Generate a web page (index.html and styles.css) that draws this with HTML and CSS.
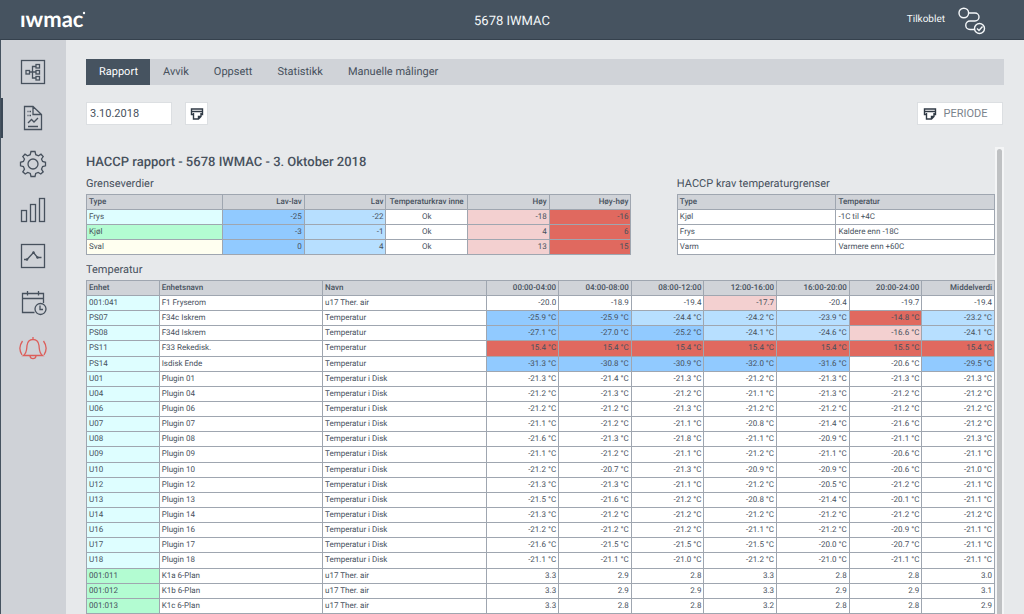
FILE: index.html
```html
<!DOCTYPE html>
<html lang="no">
<head>
<meta charset="utf-8">
<title>5678 IWMAC</title>
<link rel="stylesheet" href="styles.css">
</head>
<body>
<header class="topbar">
  <a class="logo" href="#" aria-label="iwmac"><svg width="80" height="32" viewBox="0 0 80 32"><text x="0" y="23">ıwmac</text><circle cx="64" cy="9" r="1.2"/></svg></a>
  <div class="site">5678 IWMAC</div>
  <div class="status"><span>Tilkoblet</span>
    <svg width="28" height="28" viewBox="0 0 28 28"><circle cx="5.800" cy="6" r="4.800"/><path d="M10.600 6H17a4 4 0 0 1 0 8H12a4 4 0 0 0 0 8.500H16.500"/><circle cx="21.500" cy="21.500" r="5"/><path d="M19 21.500l2 2 3.500-4"/></svg>
  </div>
</header>
<div class="layout">
  <nav class="sidebar" aria-label="Hovedmeny">
    <a href="#" aria-label="Oversikt"><svg viewBox="0 0 28 28"><rect x="2.500" y="2.500" width="23" height="23"/><rect x="7" y="12.500" width="3.500" height="3.500"/><path d="M10.500 14H17M17 8.500H13.500V20H17"/><rect x="17" y="6.500" width="3.500" height="3.500"/><rect x="17" y="12.500" width="3.500" height="3.500"/><rect x="17" y="18.500" width="3.500" height="3.500"/></svg></a>
    <a href="#" class="current" aria-label="Rapport"><svg viewBox="0 0 28 28"><path d="M5.500 2.500H14L22.500 10.500V25.500H5.500ZM14 2.500V10.500H22.500M8.500 7.500H9.500M10.500 7.500H12M8.500 11.500H9.500M10.500 11.500H12M9 22.500H19M9 19L12.500 15.500 15 18 19 14"/></svg></a>
    <a href="#" aria-label="Innstillinger"><svg viewBox="0 0 28 28"><circle cx="14" cy="14" r="5"/><path d="M12 1.500H16L16.800 4.700L19.500 5.800L22 4.200L24.200 6.500L22.500 9L23.600 11.500L26.500 12.300V15.800L23.600 16.600L22.500 19.200L24.200 21.800L21.800 24L19.200 22.500L16.700 23.500L16 26.500H12L11.300 23.500L8.800 22.500L6.200 24L3.800 21.800L5.500 19.200L4.400 16.600L1.500 15.800V12.300L4.400 11.500L5.500 9L3.800 6.500L6 4.200L8.500 5.800L11.200 4.700Z"/></svg></a>
    <a href="#" aria-label="Statistikk"><svg viewBox="0 0 28 28"><rect x="2.500" y="14.500" width="5" height="11"/><rect x="11.500" y="8.500" width="5" height="17"/><rect x="20.500" y="2.500" width="5" height="23"/></svg></a>
    <a href="#" aria-label="Graf"><svg viewBox="0 0 28 28"><rect x="2.500" y="2.500" width="23" height="23"/><path d="M5 17.500H8L14.500 10.500 18.500 15.500H22.500"/><g class="dots"><circle cx="8" cy="17.500" r="1.200"/><circle cx="14.500" cy="10.500" r="1.200"/><circle cx="18.500" cy="15.500" r="1.200"/></g></svg></a>
    <a href="#" aria-label="Kalender"><svg viewBox="0 0 28 28"><path d="M15.500 24.500H3.500V5.500H24.500V15M3.500 10.500H24.500M8.500 3V7.500M19.500 3V7.500"/><circle cx="21.500" cy="21" r="5.500"/><path d="M21 17.500V21.500H24"/></svg></a>
    <a href="#" class="alarm" aria-label="Alarmer"><svg viewBox="0 0 28 28"><path d="M4.500 21.500C8 19 7.500 16 8 11.500C8.500 7.500 11 5.500 14 5.500S19.500 7.500 20 11.500C20.500 16 20 19 23.500 21.500ZM14 3V5.500M11 22C11.500 25.500 16.500 25.500 17 22M3.500 7Q-1.500 14 3 21M24.500 7Q29.500 14 25 21"/></svg></a>
  </nav>
  <main class="content">
    <nav class="tabs" aria-label="Rapporter"><a href="#" class="selected">Rapport</a><a href="#">Avvik</a><a href="#">Oppsett</a><a href="#">Statistikk</a><a href="#">Manuelle målinger</a></nav>
    <div class="tools">
      <input type="text" class="date" aria-label="Dato" value="3.10.2018">
      <button type="button" class="print" aria-label="Skriv ut"><svg class="printer" viewBox="0 0 14 14"><path d="M3 7.500H1.500V2H12.500V7.500H11M1.500 4.500H12.500M3.500 6V12H8.500L11 9.500V6M8.500 12V9.500H11"/></svg></button>
      <button type="button" class="period"><svg class="printer" viewBox="0 0 14 14"><path d="M3 7.500H1.500V2H12.500V7.500H11M1.500 4.500H12.500M3.500 6V12H8.500L11 9.500V6M8.500 12V9.500H11"/></svg><span>PERIODE</span></button>
    </div>
    <div class="viewport">
      <article class="report">
        <h1>HACCP rapport - 5678 IWMAC - 3. Oktober 2018</h1>
        <div class="summary">
          <section class="limits">
            <h2>Grenseverdier</h2>
            <table>
              <colgroup><col class="quarter"><col span="5"></colgroup>
              <thead><tr><th>Type</th><th class="num">Lav-lav</th><th class="num">Lav</th><th class="mid">Temperaturkrav inne</th><th class="num">Høy</th><th class="num">Høy-høy</th></tr></thead>
              <tbody>
                <tr><td class="frys">Frys</td><td class="num lowlow">-25</td><td class="num low">-22</td><td class="mid">Ok</td><td class="num high">-18</td><td class="num highhigh">-16</td></tr>
                <tr><td class="kjol">Kjøl</td><td class="num lowlow">-3</td><td class="num low">-1</td><td class="mid">Ok</td><td class="num high">4</td><td class="num highhigh">6</td></tr>
                <tr><td class="sval">Sval</td><td class="num lowlow">0</td><td class="num low">4</td><td class="mid">Ok</td><td class="num high">13</td><td class="num highhigh">15</td></tr>
              </tbody>
            </table>
          </section>
          <section class="rules">
            <h2>HACCP krav temperaturgrenser</h2>
            <table>
              <thead><tr><th>Type</th><th>Temperatur</th></tr></thead>
              <tbody><tr><td>Kjøl</td><td>-1C til +4C</td></tr><tr><td>Frys</td><td>Kaldere enn -18C</td></tr><tr><td>Varm</td><td>Varmere enn +60C</td></tr></tbody>
            </table>
          </section>
        </div>
        <section>
          <h2>Temperatur</h2>
          <table class="readings">
            <colgroup><col><col class="wide"><col class="wide"><col span="7"></colgroup>
            <thead><tr><th>Enhet</th><th>Enhetsnavn</th><th>Navn</th><th class="num">00:00-04:00</th><th class="num">04:00-08:00</th><th class="num">08:00-12:00</th><th class="num">12:00-16:00</th><th class="num">16:00-20:00</th><th class="num">20:00-24:00</th><th class="num">Middelverdi</th></tr></thead>
            <tbody id="rows"></tbody>
          </table>
        </section>
      </article>
      <div class="scroll"><div class="thumb"></div></div>
    </div>
  </main>
</div>
<script src="rows.js"></script>
</body>
</html>
```
FILE: rows.js
```js
// Columns: unit | name | sensor | readings. Suffixes: b = low-low, l = low, h = high, r = high-high.
const data = `001:041|F1 Fryserom|u17 Ther. air|-20.0 -18.9 -19.4 -17.7h -20.4 -19.7 -19.4
PS07|F34c Iskrem|Temperatur|-25.9b -25.9b -24.4l -24.2l -23.9l -14.8r -23.2l
PS08|F34d Iskrem|Temperatur|-27.1b -27.0b -25.2b -24.1l -24.6l -16.6h -24.1l
PS11|F33 Rekedisk.|Temperatur|15.4r 15.4r 15.4r 15.4r 15.4r 15.5r 15.4r
PS14|Isdisk Ende|Temperatur|-31.3b -30.8b -30.9b -32.0b -31.6b -20.6 -29.5b
U01|Plugin 01|Temperatur i Disk|-21.3 -21.4 -21.3 -21.2 -21.3 -21.3 -21.3
U04|Plugin 04|Temperatur i Disk|-21.2 -21.3 -21.2 -21.1 -21.3 -21.2 -21.2
U06|Plugin 06|Temperatur i Disk|-21.2 -21.2 -21.3 -21.2 -21.2 -21.2 -21.2
U07|Plugin 07|Temperatur i Disk|-21.1 -21.2 -21.1 -20.8 -21.4 -21.6 -21.2
U08|Plugin 08|Temperatur i Disk|-21.6 -21.3 -21.8 -21.1 -20.9 -21.1 -21.3
U09|Plugin 09|Temperatur i Disk|-21.1 -21.2 -21.1 -21.2 -21.1 -20.6 -21.1
U10|Plugin 10|Temperatur i Disk|-21.2 -20.7 -21.3 -20.9 -20.9 -20.6 -21.0
U12|Plugin 12|Temperatur i Disk|-21.3 -21.3 -21.1 -21.2 -20.5 -21.2 -21.1
U13|Plugin 13|Temperatur i Disk|-21.5 -21.6 -21.2 -20.8 -21.4 -20.1 -21.1
U14|Plugin 14|Temperatur i Disk|-21.3 -21.2 -21.2 -21.2 -21.2 -21.2 -21.2
U16|Plugin 16|Temperatur i Disk|-21.2 -21.2 -21.2 -21.1 -21.2 -20.9 -21.1
U17|Plugin 17|Temperatur i Disk|-21.6 -21.5 -21.5 -21.5 -20.0 -20.7 -21.1
U18|Plugin 18|Temperatur i Disk|-21.1 -21.1 -21.0 -21.2 -21.0 -21.1 -21.1
001:011|K1a 6-Plan|u17 Ther. air|3.3 2.9 2.8 3.3 2.8 2.8 3.0
001:012|K1b 6-Plan|u17 Ther. air|3.3 2.9 2.9 3.3 2.9 2.9 3.1
001:013|K1c 6-Plan|u17 Ther. air|3.3 2.8 2.8 3.2 2.8 2.8 2.9`;
const levels = { b: "lowlow", l: "low", h: "high", r: "highhigh" };
const body = document.getElementById("rows");
data.split("\n").forEach((line, index) => {
  const [unit, name, sensor, values] = line.split("|");
  const row = body.insertRow();
  const add = (text, className) => {
    const cell = row.insertCell();
    cell.textContent = text;
    if (className) cell.className = className;
  };
  add(unit, index < 18 ? "frys" : "kjol");
  add(name);
  add(sensor);
  values.split(" ").forEach(value => {
    const level = levels[value.slice(-1)];
    const number = level ? value.slice(0, -1) : value;
    add(number + (unit.includes(":") ? "" : " °C"), "num " + (level || ""));
  });
});
```
FILE: styles.css
```css
* { box-sizing: border-box; }
body { margin: 0; height: 100vh; overflow: hidden; display: flex; flex-direction: column; background: #e7e9eb; color: #47515d; font-family: Roboto, "Liberation Sans", sans-serif; font-size: 11px; text-rendering: geometricPrecision; }
a { color: inherit; text-decoration: none; }
svg { display: block; fill: none; stroke: currentColor; }
.topbar { flex: none; height: 40px; padding: 0 38px 0 20px; display: grid; grid-template-columns: 1fr auto 1fr; align-items: center; background: #465360; border-bottom: 1px solid #35414d; color: #f4f7f9; }
.logo svg { fill: #fff; stroke: none; font: 700 22px Lato, sans-serif; }
.site { font-size: 13px; padding-left: 18px; padding-top: 3px; }
.status { display: flex; justify-content: flex-end; align-items: center; gap: 13px; font-size: 10px; }
.status svg { stroke-width: 1.4; margin-top: 2px; }
.layout { flex: 1; min-height: 0; display: flex; }
.sidebar { flex: none; width: 66px; padding-top: 9px; background: #cfd2d7; border-left: 1px solid #465360; }
.sidebar a { display: flex; height: 46px; align-items: center; justify-content: center; padding-right: 1px; }
.sidebar .current { background: linear-gradient(#3b4856, #3b4856) left center / 2px 40px no-repeat; }
.sidebar svg { width: 28px; height: 28px; stroke-width: 1.3; }
.dots { fill: currentColor; stroke: none; }
.sidebar .alarm { color: #dc5f5b; stroke-width: 2; }
.content { flex: 1; min-width: 0; padding: 19px 20px 0 20px; display: flex; flex-direction: column; }
.tabs { display: flex; background: #d0d3d8; line-height: 26px; }
.tabs a { padding: 0 12px 0 13px; }
.tabs .selected { background: #465360; color: #fff; }
.tools { display: flex; padding: 17px 1px 0 0; gap: 13px; }
.date, .print, .period { height: 23px; border: 1px solid #dcdfe2; background: #fff; color: #47515d; font: inherit; }
.date { width: 86px; padding: 0 3px; }
.print, .period { display: flex; align-items: center; justify-content: center; padding: 0; }
.print { width: 23px; }
.period { margin-left: auto; width: 86px; padding: 0 10px 0 0; gap: 7px; color: #7b838c; }
.printer { width: 14px; height: 14px; stroke: #303a45; stroke-width: 1.4; }
.viewport { flex: 1; min-height: 0; margin-top: 22px; display: flex; justify-content: space-between; }
.report { flex: 1; min-width: 0; overflow: hidden; padding-top: 6px; }
h1 { margin: 0; font-size: 13px; line-height: 20px; font-weight: 500; }
h2 { margin: 0; font-size: 11px; line-height: 16px; padding-bottom: 2px; font-weight: 400; }
.summary { display: flex; justify-content: space-between; padding: 3px 0 7px; }
.limits { width: 60%; }
.rules { width: 35%; }
table { width: 100%; border-collapse: collapse; table-layout: fixed; background: #fff; font-size: 8px; line-height: 14px; }
.readings { height: 334px; }
th, td { border: 1px solid #9fa6b0; padding: 0 2px; text-align: left; white-space: nowrap; }
th { background: #d0d3d8; font-weight: 500; }
.quarter { width: 25%; }
.wide { width: 18%; }
.num { text-align: right; }
.mid { text-align: center; }
.frys { background: #defeff; }
.kjol { background: #b3fcd2; }
.sval { background: #fffff0; }
.lowlow { background: #91caff; }
.low { background: #b7dfff; }
.high { background: #f3d0d0; }
.highhigh { background: #e0695f; }
.scroll { flex: none; width: 9px; padding: 2px 2px 0; background: #f4f5f6; }
.thumb { height: 100%; background: #bfc1c3; border-radius: 3px 3px 0 0; }
```
